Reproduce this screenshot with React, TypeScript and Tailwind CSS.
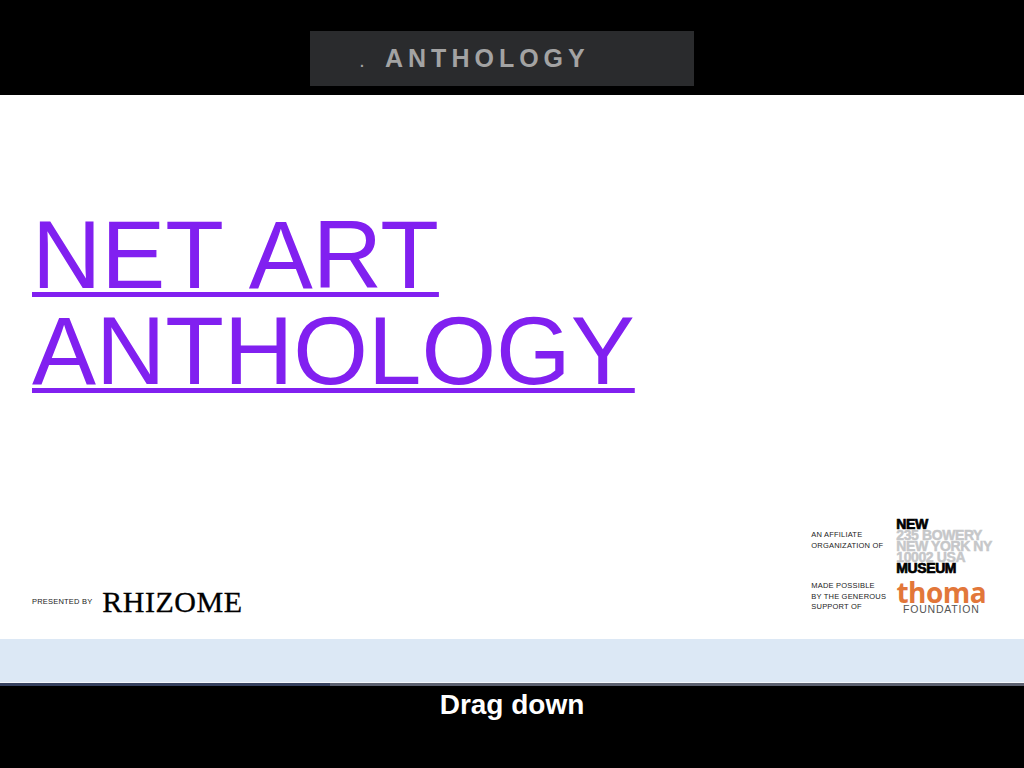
const sans = "font-['Liberation_Sans',Arial,sans-serif]";

function NewMuseumLogo() {
  return (
    <div className="flex flex-col font-['Liberation_Sans',Arial,sans-serif] font-bold text-[14px] leading-[11px] tracking-[-0.4px] whitespace-nowrap -mt-[1px]">
      <span className="text-black [-webkit-text-stroke:0.7px_black]">NEW</span>
      <span className="text-[#c6c7c9] [-webkit-text-stroke:0.5px_#c6c7c9]">235 BOWERY</span>
      <span className="text-[#c6c7c9] [-webkit-text-stroke:0.5px_#c6c7c9]">NEW YORK NY</span>
      <span className="text-[#c6c7c9] [-webkit-text-stroke:0.5px_#c6c7c9]">10002 USA</span>
      <span className="text-black [-webkit-text-stroke:0.7px_black]">MUSEUM</span>
    </div>
  );
}

function Credit({ lines, top, children }: { lines: string[]; top: string; children: React.ReactNode }) {
  return (
    <div className="flex items-start">
      <div className={`w-[85px] text-[7.5px] leading-[10.5px] tracking-[0.2px] text-[#222] ${top}`}>
        {lines.map((l) => (
          <div key={l}>{l}</div>
        ))}
      </div>
      {children}
    </div>
  );
}

export default function App() {
  return (
    <div className={`w-[1024px] h-[768px] bg-black flex flex-col overflow-hidden antialiased ${sans}`}>
      <div className="h-[95px] shrink-0 pt-[31px] pl-[310px]">
        <div className="w-[384px] h-[55px] bg-[#2a2b2d] flex items-center pl-[50px] text-[#a3a3a3]">
          <span className="w-[25px] text-[14px] font-bold pt-[8px]">.</span>
          <span className="font-bold text-[25px] tracking-[5px]">ANTHOLOGY</span>
        </div>
      </div>

      <div className="h-[544px] shrink-0 bg-white flex flex-col justify-between pl-[32px] pr-[32px] pt-[112px] pb-[24px]">
        <a className="block text-[96px] leading-[96px] text-[#8120f0] underline decoration-[5px] underline-offset-[4px] w-fit">
          <span className="[word-spacing:5px]">NET ART</span>
          <br />
          ANTHOLOGY
        </a>

        <div className="flex justify-between items-end">
          <div className="flex items-center gap-[10px] mb-[-1px]">
            <span className="text-[7.5px] tracking-[0.2px] text-[#222]">PRESENTED BY</span>
            <span className="font-['Liberation_Serif',serif] text-[30px] leading-[28px] text-black tracking-[0.5px] [-webkit-text-stroke:0.3px_black]">
              RHIZOME
            </span>
          </div>

          <div className="flex flex-col gap-[7px]">
            <Credit lines={["AN AFFILIATE", "ORGANIZATION OF"]} top="pt-[10px]">
              <NewMuseumLogo />
            </Credit>
            <Credit lines={["MADE POSSIBLE", "BY THE GENEROUS", "SUPPORT OF"]} top="pt-[0px]">
              <div className="flex flex-col items-center w-[90px]">
                <span className="font-['Open_Sans',sans-serif] font-bold text-[28px] leading-[22px] text-[#e2773a] tracking-[-0.5px]">
                  thoma
                </span>
                <span className="text-[10.5px] leading-[12px] tracking-[0.8px] text-[#555]">FOUNDATION</span>
              </div>
            </Credit>
          </div>
        </div>
      </div>

      <div className="h-[43px] shrink-0 bg-[#dce8f5]" />
      <div className="h-px shrink-0 bg-[#f4f7fb]" />
      <div className="h-[3px] shrink-0 flex">
        <div className="w-[330px] bg-[#36415f]" />
        <div className="flex-1 bg-[#5c6170]" />
      </div>

      <div className="flex-1 flex justify-center pt-[4px]">
        <span className="font-bold text-[28px] leading-[30px] text-white">Drag down</span>
      </div>
    </div>
  );
}
